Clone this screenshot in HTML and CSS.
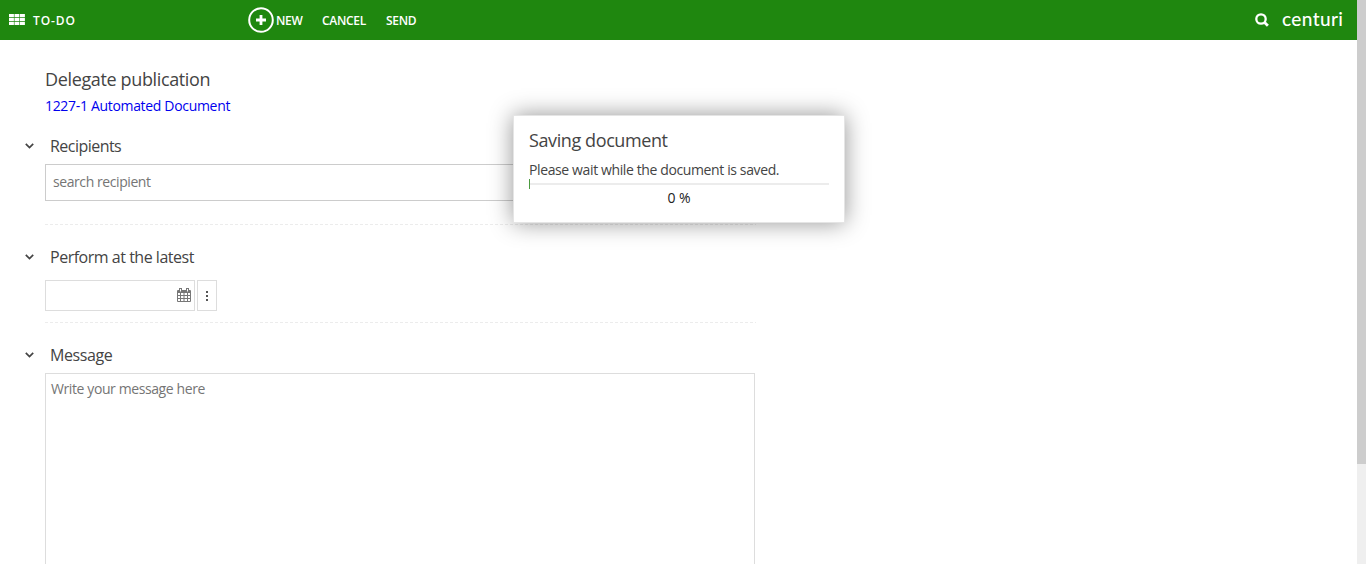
FILE: index.html
```html
<!DOCTYPE html>
<html lang="en">
<head>
<meta charset="utf-8">
<title>Delegate publication</title>
<link rel="stylesheet" href="styles.css">
</head>
<body>
<div class="page">
  <header class="topbar">
    <div class="module">
      <svg class="grid-icon" width="16" height="11" viewBox="0 0 16 11" fill="#fff"><path d="M0 0h4.900v3.200H0zM5.500 0h4.900v3.200H5.500zM11 0h4.900v3.200H11zM0 3.900h4.900v3.200H0zM5.500 3.900h4.900v3.200H5.500zM11 3.900h4.900v3.200H11zM0 7.800h4.900V11H0zM5.500 7.800h4.900V11H5.500zM11 7.800h4.900V11H11z"/></svg>
      <span class="bar-text todo">TO-DO</span>
    </div>
    <nav class="actions">
      <svg class="plus-icon" width="26" height="26" viewBox="0 0 26 26" fill="none" stroke="#fff"><circle cx="13" cy="13" r="11.8" stroke-width="2"/><path d="M13 8v10M8 13h10" stroke-width="2.8"/></svg>
      <span class="bar-text new">NEW</span>
      <span class="bar-text cancel">CANCEL</span>
      <span class="bar-text send">SEND</span>
    </nav>
    <div class="brand">
      <svg width="14" height="14" viewBox="0 0 14 14" fill="none" stroke="#fff"><circle cx="6" cy="6" r="4.700" stroke-width="2.300"/><path d="M9.300 9.300l3.600 3.500" stroke-width="2.800"/></svg>
      <span class="logo">centuri</span>
    </div>
  </header>
  <main class="content">
    <h1 class="title"><span>Delegate publication</span></h1>
    <a class="doc-link"><span>1227-1 Automated Document</span></a>
    <section class="recipients">
      <h2 class="section-head"><svg class="chevron" width="9" height="6" viewBox="0 0 9 6"><path d="M.8 .8l3.700 3.700L8.200 .8"/></svg><span class="h-recipients">Recipients</span></h2>
      <div class="search-box"><span>search recipient</span></div>
    </section>
    <section class="deadline">
      <h2 class="section-head"><svg class="chevron" width="9" height="6" viewBox="0 0 9 6"><path d="M.8 .8l3.700 3.700L8.200 .8"/></svg><span class="h-perform">Perform at the latest</span></h2>
      <div class="date-row">
        <div class="date-box"><svg width="14" height="15" viewBox="0 0 14 15"><path fill="#777" fill-rule="evenodd" d="M1 2h12q1 0 1 1v10q0 1-1 1H1q-1 0-1-1V3q0-1 1-1zM1 5v2h2V5zM4 5v2h2.500V5zM7.500 5v2H10V5zM11 5v2h2V5zM1 8v2h2V8zM4 8v2h2.500V8zM7.500 8v2H10V8zM11 8v2h2V8zM1 11v2h2v-2zM4 11v2h2.500v-2zM7.500 11v2H10v-2zM11 11v2h2v-2z"/><path d="M3.500 0v4M10.500 0v4" stroke="#777" stroke-width="3"/><path d="M3.500 1v2.500M10.500 1v2.500" stroke="#fff"/></svg></div>
        <div class="more-box"><i></i><i></i><i></i></div>
      </div>
    </section>
    <section class="message">
      <h2 class="section-head"><svg class="chevron" width="9" height="6" viewBox="0 0 9 6"><path d="M.8 .8l3.700 3.700L8.200 .8"/></svg><span class="h-message">Message</span></h2>
      <div class="message-box"><span>Write your message here</span></div>
    </section>
  </main>
</div>
<div class="scrollbar"><div class="thumb"></div></div>
<div class="dialog">
  <h3 class="dialog-title"><span>Saving document</span></h3>
  <p class="dialog-text"><span>Please wait while the document is saved.</span></p>
  <div class="progress"><div class="track"></div><div class="progress-value"></div></div>
  <p class="percent"><span>0 %</span></p>
</div>
</body>
</html>
```
FILE: styles.css
```css
* { box-sizing: border-box; }
html, body { margin: 0; height: 564px; overflow: hidden; }
body { display: flex; background: #fff; color: #444; font: 14px/20px "Open Sans", "Noto Sans", sans-serif; }
h1, h2, h3, p { margin: 0; font-weight: 400; }
svg { display: block; flex: none; }
.page { width: 1357px; height: 564px; overflow: hidden; }
.topbar { height: 40px; background: #1f870f; color: #fff; display: flex; align-items: center; padding: 0 14px 0 9px; }
.module { display: flex; align-items: center; width: 239px; gap: 7px; }
.grid-icon { margin: 0 0 1px; }
.bar-text { font-size: 12px; line-height: 20px; padding-top: 2px; font-weight: 600; white-space: nowrap; }
.todo { letter-spacing: .9px; padding-left: 1px; }
.actions { display: flex; align-items: center; flex: 1; }
.new { margin-left: 2px; width: 46px; letter-spacing: -.3px; }
.cancel { width: 64px; letter-spacing: -.3px; }
.send { letter-spacing: -.3px; }
.brand { display: flex; align-items: center; gap: 13px; }
.logo { width: 61px; font: 500 19px/24px "Lato", sans-serif; letter-spacing: .4px; padding-bottom: 2px; }
.content { width: 755px; padding: 27px 0 0 45px; }
.title { font-size: 18px; line-height: 24px; letter-spacing: -.36px; }
.doc-link { display: block; color: #00e; font-size: 14px; line-height: 20px; margin-top: 5px; letter-spacing: -.32px; }
.section-head { display: flex; align-items: center; font-size: 16px; line-height: 24px; margin-left: -20px; gap: 16px; }
.h-recipients { letter-spacing: -.53px; }
.h-perform { letter-spacing: -.48px; }
.h-message { letter-spacing: -.4px; }
.chevron path { fill: none; stroke: #444; stroke-width: 1.7; }
.recipients { height: 91px; margin-top: 18px; }
.recipients, .deadline { width: 711px; background: repeating-linear-gradient(90deg, #ececec 0 3px, transparent 3px 5px) bottom / 100% 1px no-repeat; }
.search-box { width: 710px; height: 37px; margin-top: 6px; border: 1px solid #ccc; padding: 7px; color: #757575; letter-spacing: -.42px; }
.deadline { height: 98px; padding-top: 20px; }
.date-row { display: flex; gap: 2px; margin-top: 11px; }
.date-box { width: 150px; height: 31px; border: 1px solid #ddd; display: flex; align-items: center; justify-content: flex-end; padding: 0 3px 1px 0; }
.more-box { width: 20px; height: 31px; border: 1px solid #ddd; display: flex; flex-direction: column; align-items: center; justify-content: center; gap: 2px; padding-top: 1px; }
.more-box i { width: 2px; height: 2px; background: #555; }
.message { padding-top: 20px; }
.message-box { height: 240px; margin-top: 6px; border: 1px solid #ddd; padding: 5px; color: #757575; letter-spacing: -.4px; }
.scrollbar { width: 9px; height: 564px; background: #efefef; }
.thumb { height: 464px; background: #cdcdcd; }
.dialog { position: absolute; left: 513px; top: 115px; width: 332px; height: 108px; background: #fff; border: 1px solid #e5e5e5; padding: 12px 15px 0 15px; box-shadow: 0 0 22px rgba(0,0,0,.42); }
.dialog-title { font-size: 18px; line-height: 24px; letter-spacing: -.4px; }
.dialog-text { line-height: 20px; margin-top: 8px; letter-spacing: -.38px; }
.progress { display: flex; align-items: center; height: 10px; margin-top: -1px; flex-direction: row-reverse; }
.track { flex: 1; height: 2px; background: #ececec; }
.progress-value { width: 1px; height: 10px; background: #4b9b40; }
.percent { text-align: center; color: #222; line-height: 20px; margin-top: -1px; }
```
